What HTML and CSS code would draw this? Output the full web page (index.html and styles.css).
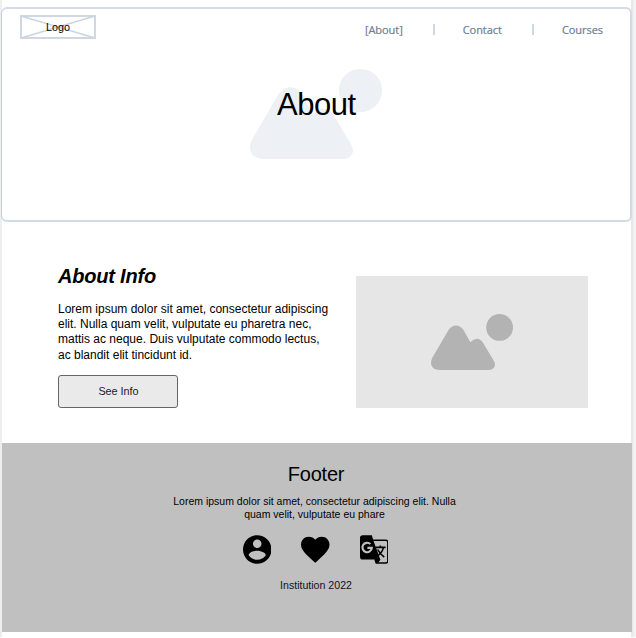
FILE: index.html
```html
<!DOCTYPE html>
<html lang="en">
<head>
<meta charset="utf-8">
<title>About</title>
<link rel="stylesheet" href="styles.css">
</head>
<body>
<svg class="defs" width="0" height="0" aria-hidden="true">
  <symbol id="landscape" viewBox="0 0 82 56">
    <circle cx="68.6" cy="13.4" r="13.4"/>
    <path d="M1.2 44 L17.5 16 Q20.5 11.4 25 11.4 Q29.5 11.4 32.5 16 L39.3 28.3 Q42.5 24.7 45.8 24.7 Q49.5 24.7 52 28.8 L63.2 47.5 Q65 51 62.8 53.8 Q61 56 58 56 H9 Q3.5 56 1.2 52.8 Q-1.2 49 1.2 44 Z"/>
  </symbol>
</svg>
<div class="page">
  <header class="hero">
    <div class="topbar">
      <div class="logo">
        <svg class="cross" viewBox="0 0 76 24"><path d="M1 1 L75 23 M1 23 L75 1"/></svg>
        <span>Logo</span>
      </div>
      <nav class="nav">
        <a class="link">[About]</a><i class="sep"></i><a class="link">Contact</a><i class="sep"></i><a class="link">Courses</a>
      </nav>
    </div>
    <div class="banner">
      <svg class="backdrop"><use href="#landscape"/></svg>
      <h1>About</h1>
    </div>
  </header>
  <main class="info">
    <section class="copy">
      <h2>About Info</h2>
      <p>Lorem ipsum dolor sit amet, consectetur adipiscing<br>elit. Nulla quam velit, vulputate eu pharetra nec,<br>mattis ac neque. Duis vulputate commodo lectus,<br>ac blandit elit tincidunt id.</p>
      <button class="button">See Info</button>
    </section>
    <div class="picture"><svg><use href="#landscape"/></svg></div>
  </main>
  <footer class="footer">
    <h3>Footer</h3>
    <p>Lorem ipsum dolor sit amet, consectetur adipiscing elit. Nulla<br>quam velit, vulputate eu phare</p>
    <div class="icons">
      <svg viewBox="2 2 20 20"><path d="M12 2C6.48 2 2 6.48 2 12s4.48 10 10 10 10-4.480 10-10S17.52 2 12 2zm0 3c1.660 0 3 1.340 3 3s-1.340 3-3 3-3-1.340-3-3 1.340-3 3-3zm0 14.200c-2.500 0-4.710-1.280-6-3.220.030-1.990 4-3.080 6-3.080 1.990 0 5.970 1.090 6 3.080-1.290 1.940-3.500 3.220-6 3.220z"/></svg>
      <svg viewBox="2 2 20 20"><path d="M12 21.350l-1.450-1.320C5.400 15.360 2 12.280 2 8.500 2 5.420 4.420 3 7.500 3c1.740 0 3.410.81 4.500 2.090C13.090 3.810 14.760 3 16.500 3 19.580 3 22 5.420 22 8.500c0 3.780-3.400 6.860-8.550 11.540L12 21.350z"/></svg>
      <svg viewBox="2 2 20 20">
        <path d="M4 2 H10.300 L11.200 5 H20 Q22 5 22 7 V20 Q22 22 20 22 H13 L12 19 H4 Q2 19 2 17 V4 Q2 2 4 2 Z"/>
        <path class="cut" d="M11.500 6 H20 Q21 6 21 7 V20 Q21 21 20 21 H14 L16 18.500 L14.700 14.700 Z"/>
        <path class="g" d="M9.300 8.200 A3.300 3.300 0 1 0 10.300 10.900 H7.200"/>
        <path class="stroke" d="M12.900 10.500 H20 M16.300 9.200 V10.500 M18.700 10.500 Q17.800 13.700 14.900 16.100 M14.400 12 Q15.800 14.900 19 17.300 M14 21.500 L16 18.700"/>
      </svg>
    </div>
    <small>Institution 2022</small>
  </footer>
</div>
</body>
</html>
```
FILE: styles.css
```css
* { box-sizing: border-box; }
body { margin: 0; background: #fff; font-family: "Liberation Sans", Arial, sans-serif; color: #000; }
h1, h2, h3, p { margin: 0; font-weight: 400; }
svg { display: block; }
.defs { position: absolute; }
.page { width: 636px; height: 637px; padding-top: 7px; background: linear-gradient(90deg, #eee 2px, #fff 2px, #fff 631px, #e7e7e7 631px, #e9e9e9 633px, #f3f3f3 634px); }
.hero { width: 631px; height: 215px; margin-left: 1px; background: #fff; border: 2px solid #d3dbe4; border-width: 2px 2px 2px 1px; border-left-color: #c5cfda; border-radius: 6px; }
.topbar { display: flex; justify-content: space-between; height: 41px; padding: 6px 27px 0 18px; }
.logo { position: relative; width: 76px; height: 24px; border: 2px solid #cfd8e2; font-size: 10.8px; line-height: 20px; text-align: center; }
.logo span { position: relative; }
.cross { position: absolute; inset: -2px; width: 76px; height: 24px; fill: none; stroke: #cbd5df; stroke-width: 1.5; }
.nav { display: flex; align-items: flex-start; height: 24px; padding-top: 7px; font: 500 11px/16px "Open Sans", sans-serif; letter-spacing: -0.05px; color: #6c7e94; -webkit-text-stroke: 0.2px #6c7e94; }
.sep { width: 2px; height: 11px; margin: 2px 28px 0 30px; background: #d0d9e2; }
.banner { display: grid; justify-items: start; padding: 18px 0 0 248px; }
.banner > * { grid-area: 1 / 1; }
.backdrop { width: 132px; height: 92px; fill: #edf0f5; }
h1 { margin: 20px 0 0 27px; font-size: 31px; line-height: 34px; letter-spacing: -0.45px; }
.info { display: flex; align-items: flex-start; height: 221px; padding: 42px 0 0 58px; }
.copy { width: 298px; }
h2 { font-size: 20px; line-height: 24px; letter-spacing: -0.2px; font-weight: 700; font-style: italic; }
.copy p { margin-top: 13.500px; font-size: 12px; line-height: 15.4px; white-space: nowrap; }
.button { display: block; width: 120px; height: 33px; margin-top: 12px; padding: 0 0 1px 1px; border: 1px solid #666; border-radius: 3px; background: #eaeaea; font: 10.8px "Liberation Sans", Arial, sans-serif; color: #1a1a2a; }
.picture { width: 232px; height: 132px; margin-top: 12px; padding: 38px 0 0 75px; background: #e6e6e6; }
.picture svg { width: 82px; height: 56px; fill: #b3b3b3; }
.footer { width: 630px; height: 189px; margin-left: 2px; padding-top: 19px; display: flex; flex-direction: column; align-items: center; background: #c0c0c0; }
h3 { font-size: 20px; line-height: 24px; letter-spacing: -0.2px; margin-right: 2px; }
.footer p { margin: 9px 5px 0 0; font-size: 10.5px; line-height: 13px; text-align: center; white-space: nowrap; }
.icons { display: flex; gap: 30px; margin: 14px 3px 0 0; }
.icons svg { width: 28.500px; height: 29px; }
.cut { fill: #c0c0c0; }
.g { fill: none; stroke: #c0c0c0; stroke-width: 1.5; }
.stroke { fill: none; stroke: #000; stroke-width: 1.1; }
small { margin: 14px 2px 0 0; font-size: 10.6px; line-height: 14px; color: #101020; }
```
